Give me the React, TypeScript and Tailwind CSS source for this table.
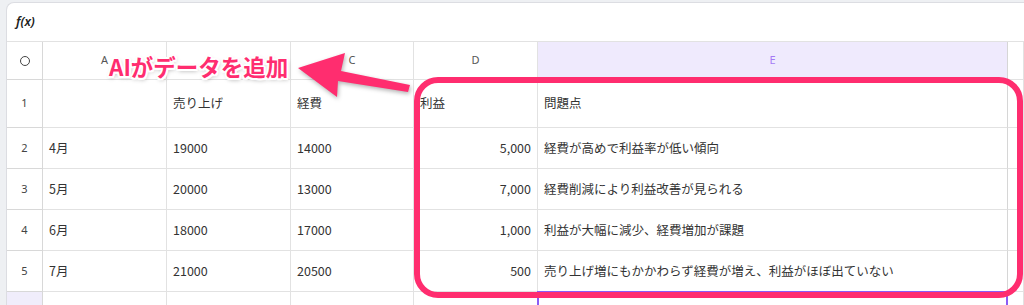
import React from "react"

type Row = {
  n: number
  month: string
  sales: string
  cost: string
  profit: string
  note: string
}

const rows: Row[] = [
  { n: 2, month: "4月", sales: "19000", cost: "14000", profit: "5,000", note: "経費が高めで利益率が低い傾向" },
  { n: 3, month: "5月", sales: "20000", cost: "13000", profit: "7,000", note: "経費削減により利益改善が見られる" },
  { n: 4, month: "6月", sales: "18000", cost: "17000", profit: "1,000", note: "利益が大幅に減少、経費増加が課題" },
  { n: 5, month: "7月", sales: "21000", cost: "20500", profit: "500", note: "売り上げ増にもかかわらず経費が増え、利益がほぼ出ていない" },
]

const cell =
  "border-r border-b border-[#e2e2e2] flex items-center px-[6px] text-[12.5px] text-[#333] font-['Noto_Sans_CJK_JP',sans-serif]"
const rowHead = "border-r border-b border-[#d8d8d8] flex items-center justify-center text-[11px] text-[#444]"
const colHead = "border-r border-b border-[#e2e2e2] flex items-center justify-center text-[11px] text-[#555]"

const App: React.FC = () => {
  return (
    <div className="relative w-[1024px] h-[305px] overflow-hidden bg-[#eef0f3] font-['Noto_Sans','Noto_Sans_CJK_JP',sans-serif]">
      <div className="ml-[6px] mt-[2px] h-[303px] bg-white border-l border-t border-[#dcdde2] rounded-tl-[8px] overflow-hidden">
        <div className="h-[39px] flex items-center px-[9px] border-b border-[#e2e2e2]">
          <span className="italic font-semibold text-[12.5px] text-[#222]">f(x)</span>
        </div>

        <div className="grid grid-cols-[36px_124px_124px_123px_124px_470px_1fr] grid-rows-[38px_48px_41px_41px_41px_41px_41px]">
          {/* column header row (B sits under the label) */}
          <div className={rowHead}>
            <span className="w-[10px] h-[10px] rounded-full border border-[#444]" />
          </div>
          <div className={colHead}>A</div>
          <div className={colHead} />
          <div className={colHead}>C</div>
          <div className={colHead}>D</div>
          <div className={`${colHead} bg-[#efeafd] text-[#a57af5] border-r-[#d6d6d6]`}>E</div>
          <div className={colHead} />

          {/* row 1: titles */}
          <div className={rowHead}>1</div>
          <div className={cell} />
          <div className={cell}>売り上げ</div>
          <div className={cell}>経費</div>
          <div className={cell}>利益</div>
          <div className={`${cell} border-r-[#d6d6d6]`}>問題点</div>
          <div className={cell} />

          {rows.map((r) => (
            <React.Fragment key={r.n}>
              <div className={rowHead}>{r.n}</div>
              <div className={cell}>{r.month}</div>
              <div className={cell}>{r.sales}</div>
              <div className={cell}>{r.cost}</div>
              <div className={`${cell} justify-end`}>{r.profit}</div>
              <div className={`${cell} border-r-[#d6d6d6]`}>{r.note}</div>
              <div className={cell} />
            </React.Fragment>
          ))}

          {/* row 6: empty, E selected */}
          <div className={`${rowHead} bg-[#f0edfb]`} />
          <div className={cell} />
          <div className={cell} />
          <div className={cell} />
          <div className={cell} />
          <div className={`${cell} relative`}>
            <div className="absolute left-[-1px] top-[-1px] right-[-1px] bottom-[-1px] border-2 border-[#8b5cf6]" />
          </div>
          <div className={cell} />
        </div>
      </div>

      {/* callout frame around the profit / issue columns */}
      <div className="absolute left-[414px] top-[77px] w-[609px] h-[221px] border-[6px] border-[#ff2d6f] rounded-[24px]" />

      {/* arrow */}
      <svg
        className="absolute left-0 top-0 pointer-events-none [filter:drop-shadow(1px_2px_2px_rgba(0,0,0,0.3))]"
        width={1024}
        height={305}
        viewBox="0 0 1024 305"
      >
        <polygon points="298,68 345,53 341,71 410,85 408,92 338,81 337,97" fill="#ff2d6f" />
      </svg>

      <span className="absolute left-[109px] top-[55px] leading-none text-[22.5px] font-bold text-[#ff2d6f] font-['Noto_Sans_CJK_JP',sans-serif] [text-shadow:-1.5px_-1.5px_0_#fff,1.5px_-1.5px_0_#fff,-1.5px_1.5px_0_#fff,1.5px_1.5px_0_#fff,0_-2px_0_#fff,0_2px_0_#fff,-2px_0_0_#fff,2px_0_0_#fff,1px_2px_4px_rgba(0,0,0,0.35)]">
        AIがデータを追加
      </span>
    </div>
  )
}

export default App
